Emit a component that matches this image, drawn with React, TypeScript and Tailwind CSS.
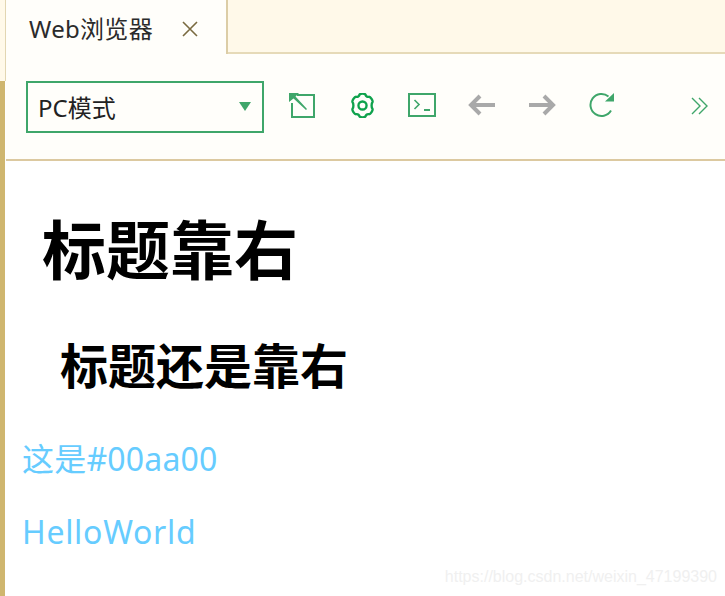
import React from "react";

const green = "#3fa66a";

function ToolIcon({ children, className }: { children: React.ReactNode; className: string }) {
  return <div className={`flex items-center justify-center ${className}`}>{children}</div>;
}

export default function App() {
  return (
    <div className="flex h-[596px] w-[725px] overflow-hidden bg-white font-['Noto_Sans','Noto_Sans_CJK_SC',sans-serif]">
      {/* left edge of the window */}
      <div className="flex w-[6px] shrink-0 flex-col">
        <div className="flex h-[81px] border-r border-[#e2d6b2] bg-[#fff9e9]" />
        <div className="flex-1 border-r border-white bg-[#cfb66f]" />
      </div>

      <div className="flex min-w-0 flex-1 flex-col">
        {/* tab strip */}
        <div className="flex h-[54px] shrink-0 bg-[#fff9e9]">
          <div className="flex h-[54px] w-[222px] items-center border-r-2 border-[#dccda6] bg-[#fffefa] pl-[23px] pt-[3px]">
            <span className="text-[24px] leading-[30px] tracking-[0.3px] text-[#2b2b2b]">Web浏览器</span>
            <svg className="ml-[28px]" width="18" height="18" viewBox="0 0 18 18">
              <path d="M2 2 L16 16 M16 2 L2 16" stroke="#7a6a40" strokeWidth="1.6" fill="none" />
            </svg>
          </div>
          <div className="flex-1 border-b-2 border-[#e6dab8]" />
        </div>

        {/* toolbar */}
        <div className="flex h-[107px] shrink-0 items-start border-b-2 border-[#dcc9a0] bg-[#fffefa] pl-[20px] pt-[27px]">
          <div className="flex h-[52px] w-[238px] items-center justify-between border-2 border-[#3fa66a] pl-[10px] pr-[11px]">
            <span className="pt-[2px] text-[24px] leading-[30px] text-[#222222]">PC模式</span>
            <svg className="mb-[2px]" width="12" height="9" viewBox="0 0 12 9">
              <path d="M0 0 H12 L6 9 Z" fill={green} />
            </svg>
          </div>

          <ToolIcon className="ml-[24px] mt-[11px] h-[26px] w-[28px]">
            <svg width="28" height="26" viewBox="0 0 28 26" fill="none">
              <path d="M9 3 H26 V25 H4 V11" stroke={green} strokeWidth="2" />
              <path d="M1 1 H11 L7.5 4.5 L19 17 L18 18 L5.5 6.5 L1 10 Z" fill={green} />
            </svg>
          </ToolIcon>

          <ToolIcon className="ml-[32px] mt-[11px] h-[26px] w-[28px]">
            <svg width="27" height="25" viewBox="2.5 1.5 19 21" fill="none" stroke="#0fa24c" strokeWidth="2">
              <path d="M9.5 2.8 C10.5 1.8 13.5 1.8 14.5 2.8 C15 4.3 15.8 5 17.4 4.7 C18.8 4.6 20.9 7.9 20.4 9.2 C19.4 10.2 19.4 13.8 20.4 14.8 C20.9 16.1 18.8 19.4 17.4 19.3 C15.8 19 15 19.7 14.5 21.2 C13.5 22.2 10.5 22.2 9.5 21.2 C9 19.7 8.2 19 6.6 19.3 C5.2 19.4 3.1 16.1 3.6 14.8 C4.6 13.8 4.6 10.2 3.6 9.2 C3.1 7.9 5.2 4.6 6.6 4.7 C8.2 5 9 4.3 9.5 2.8 Z" />
              <circle cx="12" cy="12" r="3.4" />
            </svg>
          </ToolIcon>

          <ToolIcon className="ml-[32px] mt-[11px] h-[26px] w-[28px]">
            <svg width="28" height="24" viewBox="0 0 28 24" fill="none" stroke={green}>
              <rect x="1" y="1" width="26" height="22" strokeWidth="2" />
              <path d="M6.5 7 L11 11.5 L6.5 16" strokeWidth="1.6" />
              <path d="M16 17 H22" strokeWidth="2" />
            </svg>
          </ToolIcon>

          <ToolIcon className="ml-[32px] mt-[11px] h-[26px] w-[28px]">
            <svg width="28" height="22" viewBox="0 0 28 22" fill="none" stroke="#a9a9a9" strokeWidth="4">
              <path d="M27 11 H4 M12 2 L3 11 L12 20" />
            </svg>
          </ToolIcon>

          <ToolIcon className="ml-[32px] mt-[11px] h-[26px] w-[28px]">
            <svg width="28" height="22" viewBox="0 0 28 22" fill="none" stroke="#a9a9a9" strokeWidth="4">
              <path d="M1 11 H24 M16 2 L25 11 L16 20" />
            </svg>
          </ToolIcon>

          <ToolIcon className="ml-[32px] mt-[11px] h-[26px] w-[28px]">
            <svg width="26" height="26" viewBox="0 0 26 26" fill="none">
              <path d="M19.5 4.5 A11 11 0 1 0 22 18.5" stroke={green} strokeWidth="2" />
              <path d="M25 1 V9.5 H16 Z" fill={green} />
            </svg>
          </ToolIcon>

          <ToolIcon className="ml-[75px] mt-[13px] h-[24px] w-[18px]">
            <svg width="18" height="18" viewBox="0 0 18 18" fill="none" stroke={green} strokeWidth="1.4">
              <path d="M1 1 L9 9 L1 17 M8 1 L16 9 L8 17" />
            </svg>
          </ToolIcon>
        </div>

        {/* page content */}
        <div className="relative flex-1 bg-white pl-[16px]">
          <h1 className="pl-[20px] pt-[49px] text-[64px] leading-[80px] font-bold text-black">标题靠右</h1>
          <h2 className="pl-[38px] pt-[46px] text-[48px] leading-[60px] font-bold text-black">标题还是靠右</h2>
          <p className="pt-[43px] text-[32px] leading-[40px] tracking-[0.2px] text-[#66ccff]">这是#00aa00</p>
          <p className="pt-[33px] text-[32px] leading-[40px] tracking-[0.7px] text-[#66ccff]">HelloWorld</p>
          <span className="absolute right-[8px] bottom-[9px] font-['Liberation_Sans',sans-serif] text-[16px] leading-[20px] text-[#f0f0f0]">
            https://blog.csdn.net/weixin_47199390
          </span>
        </div>
      </div>
    </div>
  );
}
